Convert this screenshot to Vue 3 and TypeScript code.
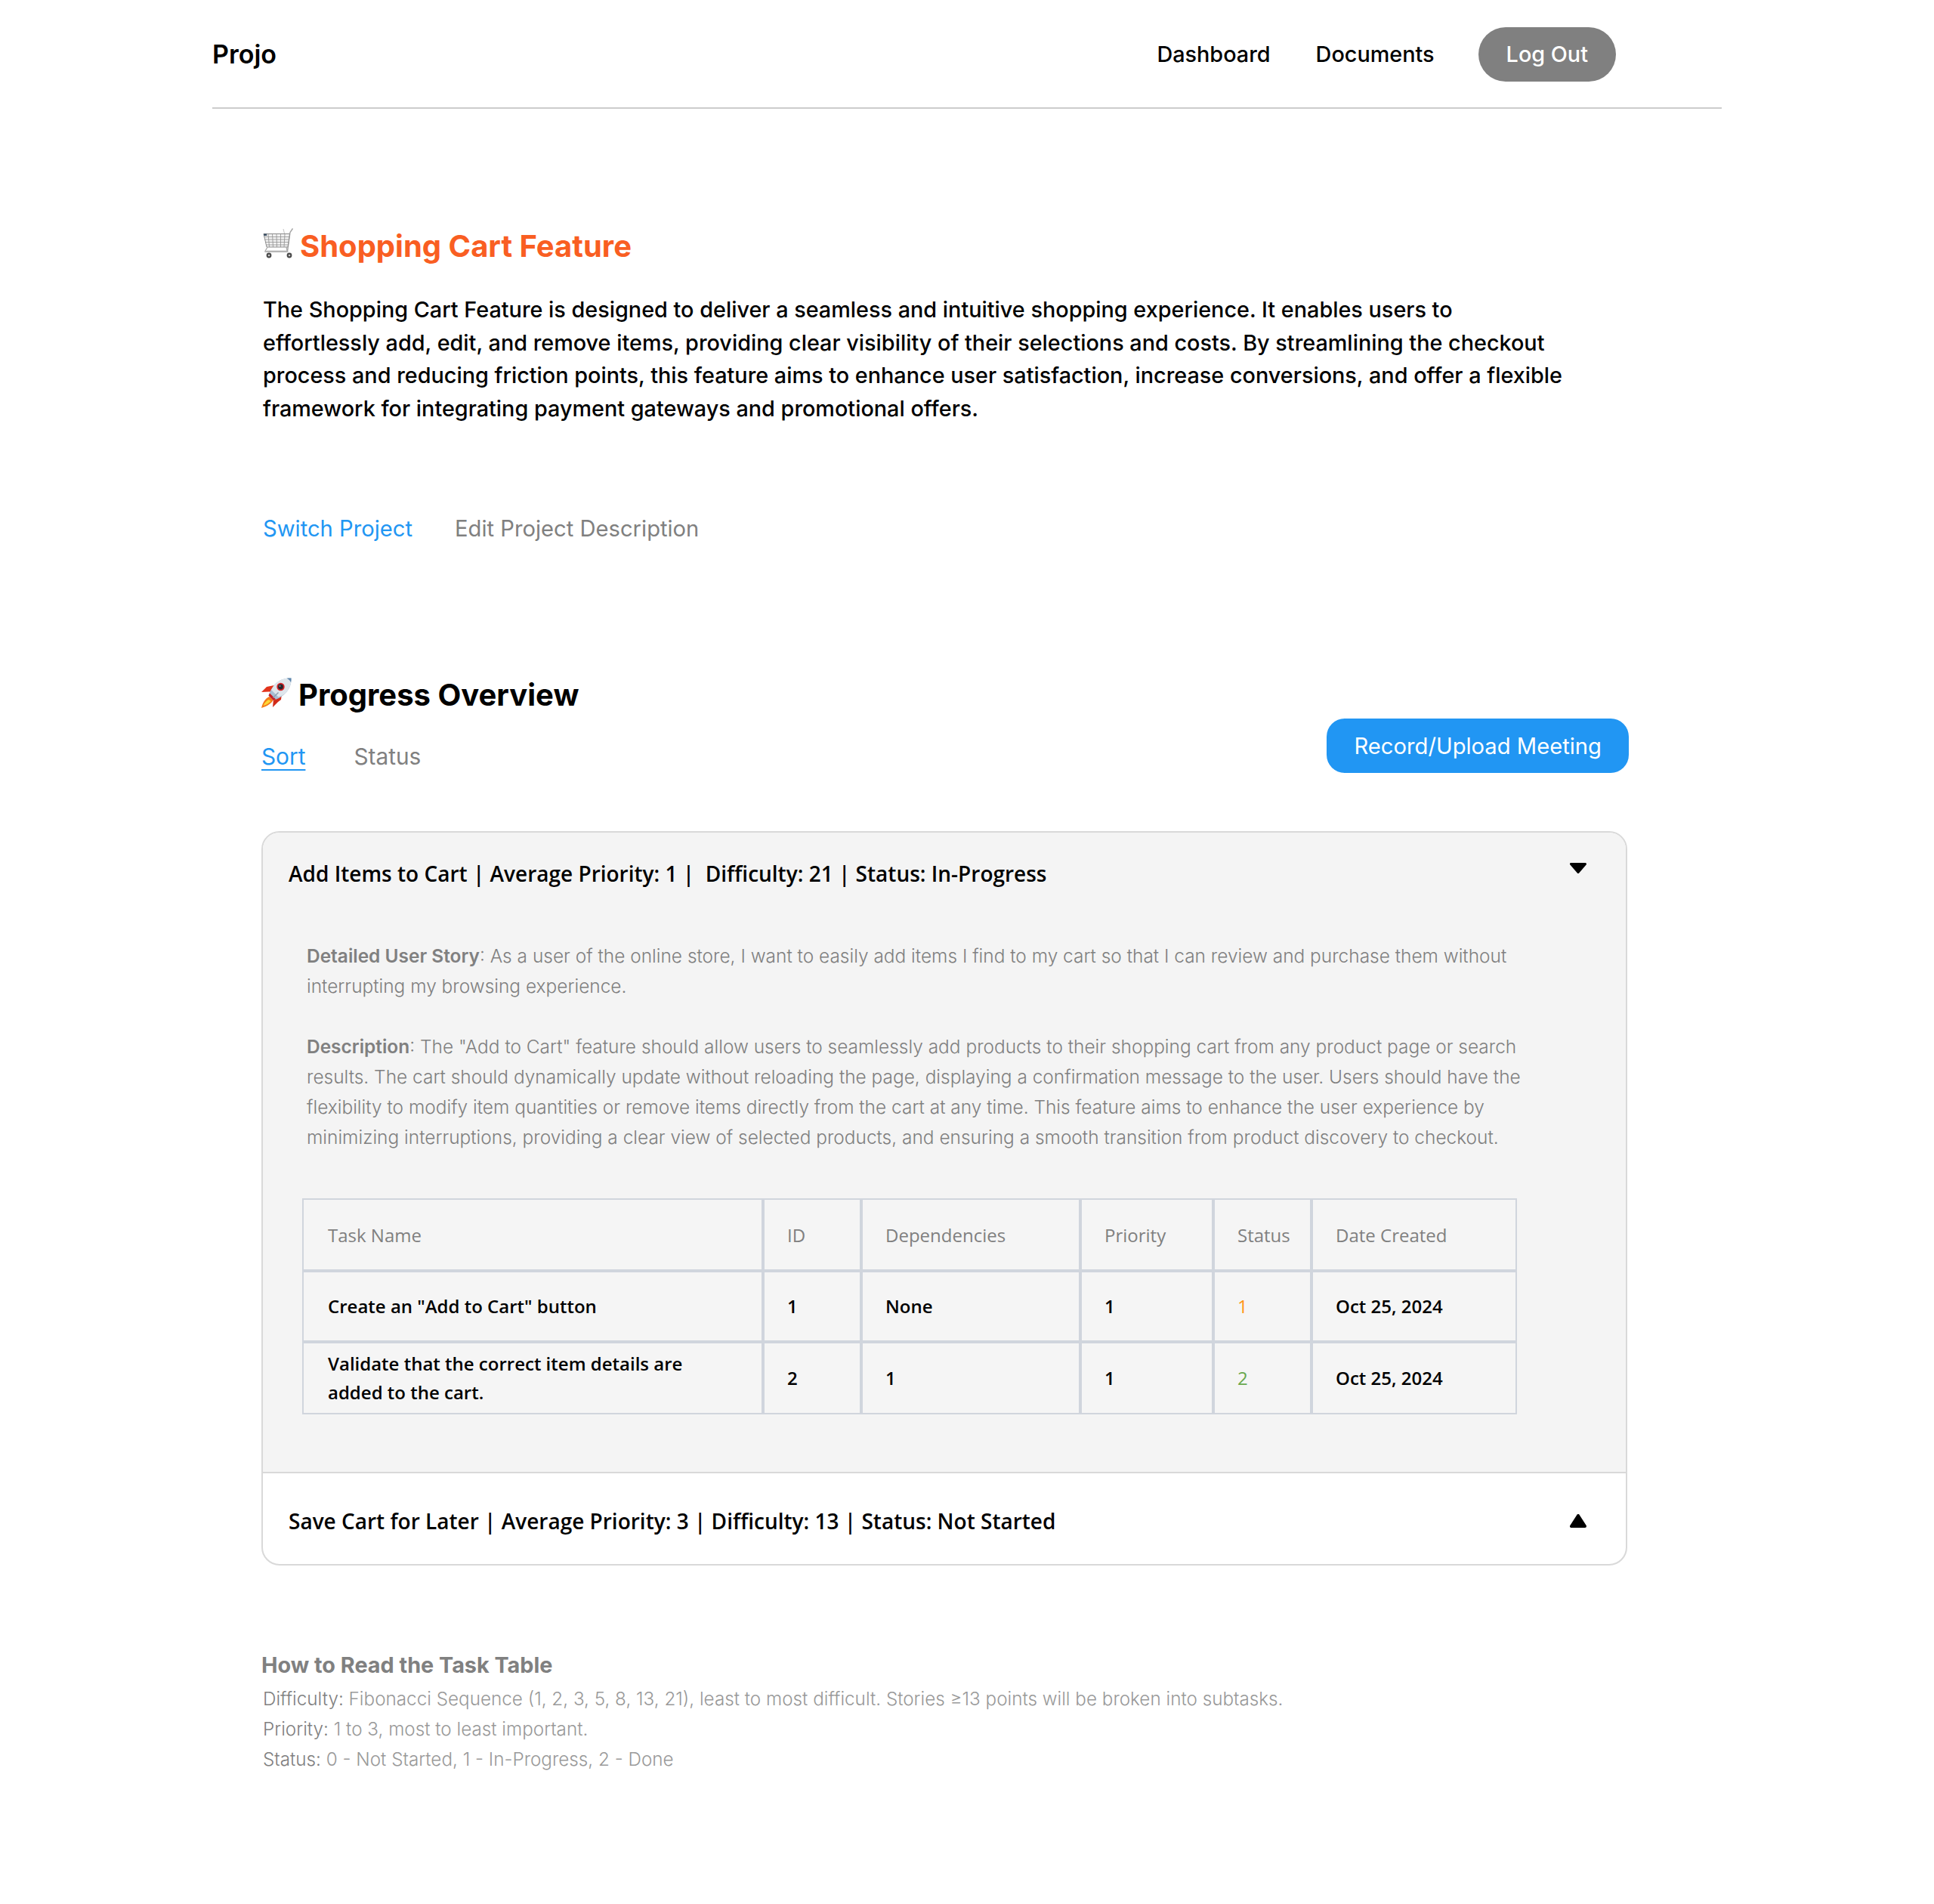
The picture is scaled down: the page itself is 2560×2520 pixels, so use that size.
<script setup lang="ts">
interface Task {
  name: string;
  id: number;
  deps: string;
  priority: number;
  status: number;
  date: string;
}

const tasks: Task[] = [
  { name: 'Create an "Add to Cart" button', id: 1, deps: "None", priority: 1, status: 1, date: "Oct 25, 2024" },
  { name: "Validate that the correct item details are added to the cart.", id: 2, deps: "1", priority: 1, status: 2, date: "Oct 25, 2024" },
];

const columns = ["Task Name", "ID", "Dependencies", "Priority", "Status", "Date Created"];

// double space after the second pipe is in the original
const openTitle = "Add Items to Cart | Average Priority: 1 |  Difficulty: 21 | Status: In-Progress";
const closedTitle = "Save Cart for Later | Average Priority: 3 | Difficulty: 13 | Status: Not Started";
</script>

<template>
  <div class="page">
    <header class="nav">
      <span class="logo">Projo</span>
      <nav class="nav-links">
        <a>Dashboard</a>
        <a>Documents</a>
        <button class="logout">Log Out</button>
      </nav>
    </header>

    <section class="intro">
      <h1 class="title">
        <svg class="emoji cart" viewBox="0 0 40 40" aria-hidden="true">
          <path d="M39.500 .500L36 5.500 32.500 30.500H5" fill="none" stroke="#a3a3a3" stroke-width="1.400" />
          <path d="M27 1l1.500 6" fill="none" stroke="#c4c4c4" stroke-width="1" />
          <path d="M1 7.500h34.500L33 25H5z" fill="#f2f2f2" stroke="#8c8c8c" stroke-width="1" />
          <path d="M1.500 11.500h33.500M2.500 15h32M3.500 18.500h30.500M4.500 22h29M7 7.500l1.500 17.500M12.500 7.500l1 17.500M18 7.500l.500 17.500M23.500 7.500v17.500M29 7.500l-1 17.500" stroke="#8f8f8f" stroke-width=".8" fill="none" />
          <path d="M1 7.500h4l.300 2.500H1.300z" fill="#3d5166" />
          <path d="M6 25l-3 5.500h3M31 25l1 5" fill="none" stroke="#a8a8a8" stroke-width="1.200" />
          <path d="M2.500 30.500h31v1.600h-31z" fill="#bdbdbd" />
          <circle cx="8" cy="36" r="3.400" fill="#4a4a4a" />
          <circle cx="35" cy="36" r="3.400" fill="#4a4a4a" />
          <circle cx="8" cy="36" r="1.300" fill="#c9c9c9" />
          <circle cx="35" cy="36" r="1.300" fill="#c9c9c9" />
        </svg>
        <span>Shopping Cart Feature</span>
      </h1>
      <p class="summary">
        The Shopping Cart Feature is designed to deliver a seamless and intuitive shopping experience. It enables users to
        effortlessly add, edit, and remove items, providing clear visibility of their selections and costs. By streamlining the checkout
        process and reducing friction points, this feature aims to enhance user satisfaction, increase conversions, and offer a flexible
        framework for integrating payment gateways and promotional offers.
      </p>
      <div class="project-links">
        <a class="blue">Switch Project</a>
        <a class="grey">Edit Project Description</a>
      </div>
    </section>

    <section class="progress">
      <div class="progress-head">
        <div>
          <h2 class="progress-title">
            <svg class="emoji rocket" viewBox="0 0 40 42" aria-hidden="true">
              <path d="M17 11L7 13 0 20l10-.500 5 .500z" fill="#e2341c" />
              <path d="M27 22l-1 8-4 3-7 7 1-11 2-4z" fill="#d22a18" />
              <path d="M11 26c-4 1-9 6-11 15 8-2 14-7 16-11z" fill="#f47a1a" />
              <path d="M10 30c-3 1-6 4-7.500 8 4.500-1 8-3.500 10-6z" fill="#fdd835" />
              <path d="M39.500 1.500C31 1 23.500 4 18 9.500 14 14 11 19.500 9.500 24.500L16 31c5-1.500 10.500-4.500 15-8.500 6-6 9-13 8.500-21z" fill="#a7bed3" />
              <path d="M39.500 1.500C31 1 23.500 4 18 9.500c-2 2.500-3.500 5-5 7.500l9.500 9.500c3-1 6-2.500 8.500-4 6-6 9-13 8.500-21z" fill="#dfe6ec" />
              <path d="M33.500 1.800c2.500 1 4.500 3 5.500 5.500.500-2 .600-4 .500-5.800-2-.100-4 0-6 .300z" fill="#5f87ad" />
              <path d="M9.500 24.500c.500-1 1-2 1.500-3l8 8c-1 .600-2 1-3 1.500z" fill="#c81e22" />
              <path d="M15 27l7-7 1 1-7 7z" fill="#8b9fb2" />
              <circle cx="25.500" cy="13" r="5.200" fill="#d7262b" />
              <circle cx="25.500" cy="13" r="3.400" fill="#23272e" />
              <circle cx="24.500" cy="12" r="1.100" fill="#77828e" />
            </svg>
            <span>Progress Overview</span>
          </h2>
          <div class="tabs">
            <a class="blue active">Sort</a>
            <a class="grey">Status</a>
          </div>
        </div>
        <button class="record">Record/Upload Meeting</button>
      </div>

      <div class="accordion">
        <div class="item open">
          <div class="item-head">
            <span>{{ openTitle }}</span>
            <svg class="chev down" viewBox="0 0 22 14" aria-hidden="true">
              <path d="M1.500 1.500h19L11 12.500z" fill="#000" stroke="#000" stroke-width="3" stroke-linejoin="round" />
            </svg>
          </div>
          <div class="item-body">
            <p><b>Detailed User Story</b>: As a user of the online store, I want to easily add items I find to my cart so that I can review and purchase them without interrupting my browsing experience.</p>
            <p><b>Description</b>: The "Add to Cart" feature should allow users to seamlessly add products to their shopping cart from any product page or search results. The cart should dynamically update without reloading the page, displaying a confirmation message to the user. Users should have the flexibility to modify item quantities or remove items directly from the cart at any time. This feature aims to enhance the user experience by minimizing interruptions, providing a clear view of selected products, and ensuring a smooth transition from product discovery to checkout.</p>
            <table class="tasks">
              <colgroup>
                <col class="col-name" />
                <col class="col-id" />
                <col class="col-deps" />
                <col class="col-priority" />
                <col class="col-status" />
                <col class="col-date" />
              </colgroup>
              <thead>
                <tr>
                  <th v-for="c in columns" :key="c">{{ c }}</th>
                </tr>
              </thead>
              <tbody>
                <tr v-for="t in tasks" :key="t.id">
                  <td>{{ t.name }}</td>
                  <td>{{ t.id }}</td>
                  <td>{{ t.deps }}</td>
                  <td>{{ t.priority }}</td>
                  <td :class="t.status === 1 ? 'orange' : 'green'">{{ t.status }}</td>
                  <td>{{ t.date }}</td>
                </tr>
              </tbody>
            </table>
          </div>
        </div>
        <div class="item closed">
          <div class="item-head">
            <span>{{ closedTitle }}</span>
            <svg class="chev up" viewBox="0 0 22 18" aria-hidden="true">
              <path d="M2 16h18L11 2z" fill="#000" stroke="#000" stroke-width="4" stroke-linejoin="round" />
            </svg>
          </div>
        </div>
      </div>

      <div class="legend">
        <h3>How to Read the Task Table</h3>
        <p><b>Difficulty:</b> Fibonacci Sequence (1, 2, 3, 5, 8, 13, 21), least to most difficult. Stories ≥13 points will be broken into subtasks.</p>
        <p><b>Priority:</b> 1 to 3, most to least important.</p>
        <p><b>Status:</b> 0 - Not Started, 1 - In-Progress, 2 - Done</p>
      </div>
    </section>
  </div>
</template>

<style>
html,
body {
  background: #fff;
}
</style>

<style scoped>
.page {
  width: 1998px;
  height: 2520px;
  margin: 0 auto;
  font-family: Inter, "Noto Sans", sans-serif;
  color: #000;
}

.nav {
  display: flex;
  align-items: center;
  justify-content: space-between;
  height: 142px;
  padding-right: 140px;
  border-bottom: 2px solid #cccccc;
}

.logo {
  font-size: 34px;
  font-weight: 600;
}

.nav-links {
  display: flex;
  align-items: center;
  gap: 60px;
  font-size: 28.800px;
  font-weight: 500;
}

.logout {
  height: 72px;
  margin: 1px 0 0 -2px;
  padding: 0 37px;
  border: none;
  border-radius: 36px;
  background: #808080;
  color: #fff;
  font: inherit;
}

.intro {
  padding: 153px 0 0 67px;
}

.title {
  display: flex;
  align-items: center;
  gap: 9px;
  margin: 0;
  height: 56px;
  font-size: 40px;
  font-weight: 700;
  color: #f95e22;
}

.emoji {
  flex: none;
}

.cart {
  width: 40px;
  height: 40px;
  margin-top: -6px;
}

.rocket {
  width: 40px;
  height: 42px;
  margin-top: -4px;
}

.summary {
  width: 1726px;
  margin: 35px 0 0;
  font-size: 28.800px;
  font-weight: 500;
  line-height: 43.500px;
}

.project-links {
  display: flex;
  gap: 56px;
  margin-top: 120px;
  font-size: 29.200px;
}

.blue {
  color: #2196f3;
}

.grey {
  color: #808080;
}

.progress {
  padding: 174px 0 0 65px;
}

.progress-head {
  display: flex;
  justify-content: space-between;
  align-items: flex-end;
  width: 1810px;
}

.progress-title {
  display: flex;
  align-items: center;
  gap: 9px;
  margin: 0;
  height: 56px;
  font-size: 40px;
  font-weight: 700;
}

.tabs {
  display: flex;
  gap: 64px;
  margin: 36px 0 4px;
  font-size: 29.800px;
}

.tabs .active {
  text-decoration: underline;
  text-underline-offset: 6px;
}

.record {
  height: 72px;
  padding: 0 36px;
  border: none;
  border-radius: 24px;
  background: #2196f3;
  color: #fff;
  font: inherit;
  font-size: 29.200px;
}

.accordion {
  width: 1808px;
  box-sizing: border-box;
  margin-top: 77px;
  border: 2px solid #d9d9d9;
  border-radius: 24px;
  overflow: hidden;
  font-family: "Open Sans", sans-serif;
}

.item.open {
  background: #f4f4f4;
  border-bottom: 2px solid #d9d9d9;
}

.item-head {
  display: flex;
  justify-content: space-between;
  align-items: center;
  padding: 0 52px 0 34px;
  font-size: 28px;
  font-weight: 600;
  white-space: pre;
}

.open .item-head {
  height: 107px;
}

.closed .item-head {
  box-sizing: border-box;
  height: 120px;
  padding-top: 5px;
}

.chev {
  width: 22px;
}

.down {
  height: 14px;
  margin-top: -14px;
}

.up {
  height: 18px;
}

.item-body {
  padding: 36px 0 76px 52px;
  color: #808080;
  font-family: Inter, "Noto Sans", sans-serif;
  font-size: 24.450px;
  font-weight: 300;
  line-height: 40px;
}

.item-body p {
  width: 1620px;
  margin: 0 0 40px 6px;
}

.item-body b {
  font-weight: 600;
}

.tasks {
  table-layout: fixed;
  width: 1608px;
  margin-top: 61px;
  border-spacing: 0;
  background: #f5f5f5;
  font-family: "Open Sans", sans-serif;
  font-size: 24px;
  line-height: 38px;
}

.col-name {
  width: 610px;
}

.col-id {
  width: 130px;
}

.col-deps {
  width: 290px;
}

.col-priority {
  width: 176px;
}

.col-status {
  width: 130px;
}

.col-date {
  width: 272px;
}

.tasks th,
.tasks td {
  box-sizing: border-box;
  height: 94px;
  padding: 8px 30px;
  border: 2px solid #d0d5dd;
  text-align: left;
}

.tasks th:first-child,
.tasks td:first-child {
  padding-left: 32px;
}

.tasks th {
  height: 96px;
  padding-top: 10px;
  font-weight: 400;
  color: #808080;
}

.tasks td {
  font-weight: 600;
  color: #000;
}

.tasks td.orange {
  color: #ff9416;
  font-weight: 500;
}

.tasks td.green {
  color: #6aa84f;
  font-weight: 500;
}

.legend {
  margin-top: 112px;
  color: #999999;
  font-size: 24.250px;
  font-weight: 300;
  line-height: 40px;
}

.legend h3 {
  margin: 0 0 5px;
  font-size: 28.800px;
  font-weight: 700;
  color: #808080;
}

.legend p {
  margin: 0 0 0 2px;
}

.legend b {
  font-weight: 300;
  color: #808080;
}
</style>
